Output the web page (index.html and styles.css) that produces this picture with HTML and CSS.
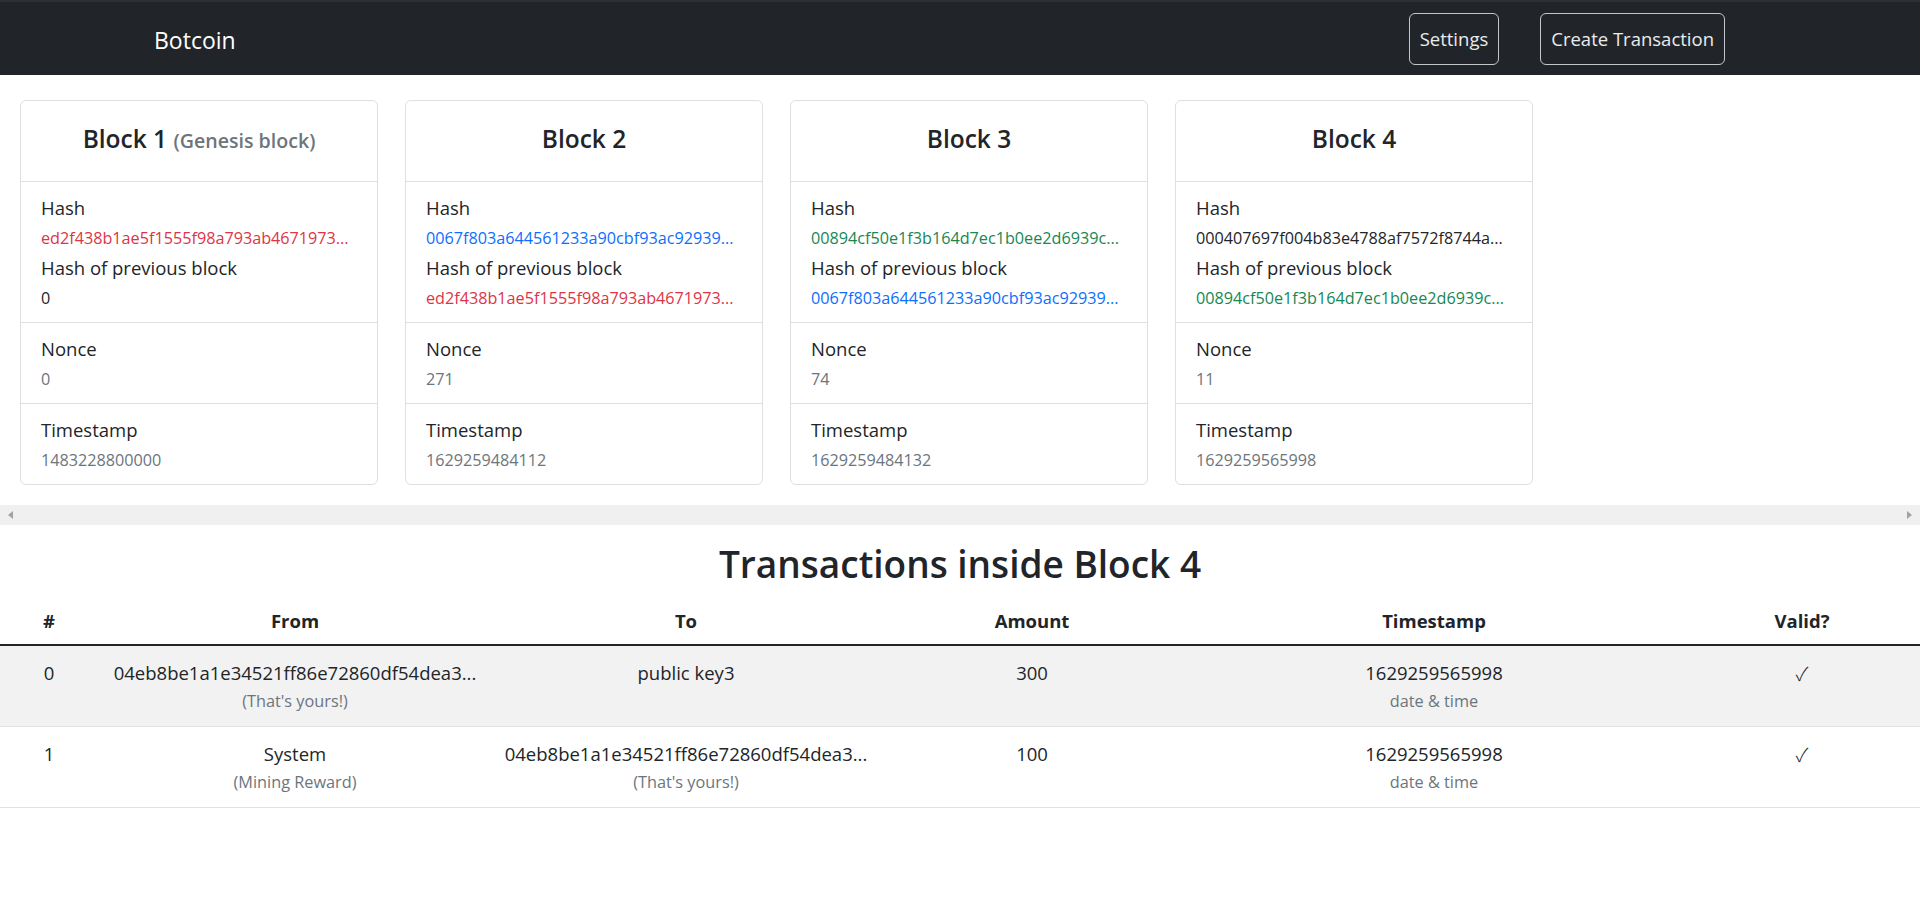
FILE: index.html
```html
<!DOCTYPE html>
<html lang="en">
<head>
<meta charset="utf-8">
<title>Botcoin</title>
<link rel="stylesheet" href="styles.css">
</head>
<body>
<nav class="navbar">
  <span class="brand">Botcoin</span>
  <div class="nav-actions">
    <button class="btn-outline" type="button">Settings</button>
    <button class="btn-outline" type="button">Create Transaction</button>
  </div>
</nav>

<section class="chain">
  <div class="chain-track">
    <div class="block-card">
      <div class="card-head"><h3 class="card-title">Block 1 <small class="muted">(Genesis block)</small></h3></div>
      <div class="card-sec">
        <div class="lbl">Hash</div>
        <div class="val hash c-red">ed2f438b1ae5f1555f98a793ab4671973...</div>
        <div class="lbl">Hash of previous block</div>
        <div class="val hash">0</div>
      </div>
      <div class="card-sec">
        <div class="lbl">Nonce</div>
        <div class="val muted">0</div>
      </div>
      <div class="card-sec">
        <div class="lbl">Timestamp</div>
        <div class="val muted">1483228800000</div>
      </div>
    </div>

    <div class="block-card">
      <div class="card-head"><h3 class="card-title">Block 2</h3></div>
      <div class="card-sec">
        <div class="lbl">Hash</div>
        <div class="val hash c-blue">0067f803a644561233a90cbf93ac92939...</div>
        <div class="lbl">Hash of previous block</div>
        <div class="val hash c-red">ed2f438b1ae5f1555f98a793ab4671973...</div>
      </div>
      <div class="card-sec">
        <div class="lbl">Nonce</div>
        <div class="val muted">271</div>
      </div>
      <div class="card-sec">
        <div class="lbl">Timestamp</div>
        <div class="val muted">1629259484112</div>
      </div>
    </div>

    <div class="block-card">
      <div class="card-head"><h3 class="card-title">Block 3</h3></div>
      <div class="card-sec">
        <div class="lbl">Hash</div>
        <div class="val hash c-green">00894cf50e1f3b164d7ec1b0ee2d6939c...</div>
        <div class="lbl">Hash of previous block</div>
        <div class="val hash c-blue">0067f803a644561233a90cbf93ac92939...</div>
      </div>
      <div class="card-sec">
        <div class="lbl">Nonce</div>
        <div class="val muted">74</div>
      </div>
      <div class="card-sec">
        <div class="lbl">Timestamp</div>
        <div class="val muted">1629259484132</div>
      </div>
    </div>

    <div class="block-card">
      <div class="card-head"><h3 class="card-title">Block 4</h3></div>
      <div class="card-sec">
        <div class="lbl">Hash</div>
        <div class="val hash">000407697f004b83e4788af7572f8744a...</div>
        <div class="lbl">Hash of previous block</div>
        <div class="val hash c-green">00894cf50e1f3b164d7ec1b0ee2d6939c...</div>
      </div>
      <div class="card-sec">
        <div class="lbl">Nonce</div>
        <div class="val muted">11</div>
      </div>
      <div class="card-sec">
        <div class="lbl">Timestamp</div>
        <div class="val muted">1629259565998</div>
      </div>
    </div>
  </div>
  <div class="fake-scrollbar">
    <span class="arrow arrow-left"></span>
    <span class="arrow arrow-right"></span>
  </div>
</section>

<h1 class="tx-title">Transactions inside Block 4</h1>

<table class="tx-table">
  <colgroup>
    <col class="col-num">
    <col class="col-from">
    <col class="col-to">
    <col class="col-amount">
    <col class="col-time">
    <col class="col-valid">
  </colgroup>
  <thead>
    <tr>
      <th>#</th>
      <th>From</th>
      <th>To</th>
      <th>Amount</th>
      <th>Timestamp</th>
      <th>Valid?</th>
    </tr>
  </thead>
  <tbody>
    <tr class="striped">
      <td>0</td>
      <td><div>04eb8be1a1e34521ff86e72860df54dea3...</div><div class="sub">(That's yours!)</div></td>
      <td><div>public key3</div></td>
      <td>300</td>
      <td><div>1629259565998</div><div class="sub">date &amp; time</div></td>
      <td><span class="check">&#10003;</span></td>
    </tr>
    <tr>
      <td>1</td>
      <td><div>System</div><div class="sub">(Mining Reward)</div></td>
      <td><div>04eb8be1a1e34521ff86e72860df54dea3...</div><div class="sub">(That's yours!)</div></td>
      <td>100</td>
      <td><div>1629259565998</div><div class="sub">date &amp; time</div></td>
      <td><span class="check">&#10003;</span></td>
    </tr>
  </tbody>
</table>
</body>
</html>
```

FILE: styles.css
```css
* { box-sizing: border-box; }

html, body {
  margin: 0;
  padding: 0;
  background: #fff;
}

body {
  font-family: "Open Sans", "Noto Sans", "Liberation Sans", sans-serif;
  font-size: 15px;
  line-height: 1.5;
  color: #212529;
}

/* ---------- navbar ---------- */
.navbar {
  height: 75px;
  background: #212529;
  border-top: 2px solid #2c3035;
  display: flex;
  align-items: center;
  justify-content: space-between;
  padding: 0 195px 0 154px;
}

.brand {
  color: #fff;
  font-size: 23px;
  line-height: 30px;
  margin-top: 2px;
}

.nav-actions {
  display: flex;
  gap: 41px;
}

.btn-outline {
  font-family: inherit;
  font-size: 18.5px;
  line-height: 30px;
  color: #e9ecef;
  background: transparent;
  border: 1px solid #c3c7cb;
  border-radius: 6px;
  padding: 10px 10px;
  cursor: pointer;
}

/* ---------- chain ---------- */
.chain {
  padding-top: 25px;
}

.chain-track {
  display: flex;
  gap: 27px;
  padding: 0 0 20px 20px;
  overflow: hidden;
}

.block-card {
  flex: none;
  width: 358px;
  min-width: 0;
  border: 1px solid #dfdfdf;
  border-radius: 6px;
  background: #fff;
}

.card-head {
  height: 81px;
  border-bottom: 1px solid #dfdfdf;
  display: flex;
  align-items: center;
  justify-content: center;
  padding-bottom: 5px;
}

.card-title {
  margin: 0;
  font-size: 24.5px;
  font-weight: 600;
  line-height: 1.2;
}

.card-title .muted {
  font-size: 0.8em;
  font-weight: 600;
}

.card-sec {
  padding: 11px 20px 9px;
  border-bottom: 1px solid #dfdfdf;
}

.card-sec:last-child {
  border-bottom: 0;
}

.lbl {
  font-size: 18.5px;
  line-height: 30px;
}

.val {
  font-size: 16.2px;
  line-height: 30px;
}

.hash {
  white-space: nowrap;
}

.muted { color: #6c757d; }
.c-red { color: #dc3545; }
.c-blue { color: #0d6efd; }
.c-green { color: #198754; }

.fake-scrollbar {
  height: 20px;
  background: #f0f0f0;
  display: flex;
  align-items: center;
  justify-content: space-between;
  padding: 0 8px;
}

.arrow {
  width: 0;
  height: 0;
  border-top: 4px solid transparent;
  border-bottom: 4px solid transparent;
}

.arrow-left { border-right: 5px solid #a3a3a3; }
.arrow-right { border-left: 5px solid #a3a3a3; }

/* ---------- transactions ---------- */
.tx-title {
  margin: 15px 0 13px;
  text-align: center;
  font-size: 37px;
  font-weight: 600;
  line-height: 48px;
}

.tx-table {
  width: 100%;
  table-layout: fixed;
  border-collapse: collapse;
  font-size: 18.5px;
  line-height: 30px;
  text-align: center;
}

.col-num { width: 98px; }
.col-from { width: 394px; }
.col-to { width: 388px; }
.col-amount { width: 304px; }
.col-time { width: 500px; }
.col-valid { width: 236px; }

.tx-table th {
  font-weight: 700;
  padding: 5px 8px 8px;
  border-bottom: 2px solid #212529;
}

.tx-table td {
  padding: 12px 8px;
  vertical-align: top;
  border-bottom: 1px solid #dee2e6;
}

.tx-table tr.striped td {
  background: #f2f2f2;
}

.sub {
  color: #6c757d;
  font-size: 16.3px;
  line-height: 26px;
}

.check {
  font-family: "Noto Sans CJK JP", "DejaVu Sans", sans-serif;
  font-size: 19px;
  font-weight: 300;
}
```
